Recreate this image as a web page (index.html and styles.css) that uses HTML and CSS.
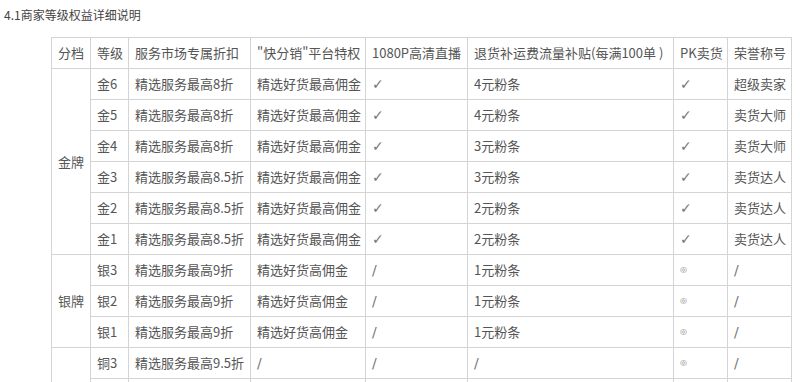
FILE: index.html
```html
<!DOCTYPE html>
<html lang="zh">
<head>
<meta charset="utf-8">
<title>商家等级权益详细说明</title>
<link rel="stylesheet" href="styles.css">
</head>
<body>
<div class="page">
  <h4 class="title">4.1商家等级权益详细说明</h4>
  <div class="table-wrap">
    <table class="grade">
      <colgroup>
        <col class="c-tier"><col class="c-level"><col class="c-disc"><col class="c-fx"><col class="c-live"><col class="c-sub"><col class="c-pk"><col class="c-hon">
      </colgroup>
      <thead>
        <tr><th>分档</th><th>等级</th><th>服务市场专属折扣</th><th>"快分销"平台特权</th><th>1080P高清直播</th><th>退货补运费流量补贴(每满100单 )</th><th>PK卖货</th><th>荣誉称号</th></tr>
      </thead>
      <tbody>
        <tr><td rowspan="6">金牌</td><td>金6</td><td>精选服务最高8折</td><td>精选好货最高佣金</td><td class="mk">✓</td><td>4元粉条</td><td class="mk">✓</td><td>超级卖家</td></tr>
        <tr><td>金5</td><td>精选服务最高8折</td><td>精选好货最高佣金</td><td class="mk">✓</td><td>4元粉条</td><td class="mk">✓</td><td>卖货大师</td></tr>
        <tr><td>金4</td><td>精选服务最高8折</td><td>精选好货最高佣金</td><td class="mk">✓</td><td>3元粉条</td><td class="mk">✓</td><td>卖货大师</td></tr>
        <tr><td>金3</td><td>精选服务最高8.5折</td><td>精选好货最高佣金</td><td class="mk">✓</td><td>3元粉条</td><td class="mk">✓</td><td>卖货达人</td></tr>
        <tr><td>金2</td><td>精选服务最高8.5折</td><td>精选好货最高佣金</td><td class="mk">✓</td><td>2元粉条</td><td class="mk">✓</td><td>卖货达人</td></tr>
        <tr><td>金1</td><td>精选服务最高8.5折</td><td>精选好货最高佣金</td><td class="mk">✓</td><td>2元粉条</td><td class="mk">✓</td><td>卖货达人</td></tr>
        <tr><td rowspan="3">银牌</td><td>银3</td><td>精选服务最高9折</td><td>精选好货高佣金</td><td class="mk">/</td><td>1元粉条</td><td class="dot">◎</td><td class="mk">/</td></tr>
        <tr><td>银2</td><td>精选服务最高9折</td><td>精选好货高佣金</td><td class="mk">/</td><td>1元粉条</td><td class="dot">◎</td><td class="mk">/</td></tr>
        <tr><td>银1</td><td>精选服务最高9折</td><td>精选好货高佣金</td><td class="mk">/</td><td>1元粉条</td><td class="dot">◎</td><td class="mk">/</td></tr>
        <tr><td rowspan="3">铜牌</td><td>铜3</td><td>精选服务最高9.5折</td><td class="mk">/</td><td class="mk">/</td><td class="mk">/</td><td class="dot">◎</td><td class="mk">/</td></tr>
        <tr><td>铜2</td><td>精选服务最高9.5折</td><td class="mk">/</td><td class="mk">/</td><td class="mk">/</td><td class="dot">◎</td><td class="mk">/</td></tr>
        <tr><td>铜1</td><td>精选服务最高9.5折</td><td class="mk">/</td><td class="mk">/</td><td class="mk">/</td><td class="dot">◎</td><td class="mk">/</td></tr>
      </tbody>
    </table>
  </div>
</div>
</body>
</html>
```

FILE: styles.css
```css
html, body {
  margin: 0;
  padding: 0;
  background: #fff;
}
body {
  font-family: "Noto Sans CJK SC", "Liberation Sans", sans-serif;
  color: #444;
}
.page {
  padding: 0 0 0 4px;
}
.title {
  margin: 0;
  padding-top: 6px;
  height: 37px;
  box-sizing: border-box;
  font-size: 12px;
  line-height: 17px;
  font-weight: normal;
  color: #444;
}
.table-wrap {
  padding-left: 47px;
}
.grade {
  border-collapse: collapse;
  table-layout: fixed;
  width: 741px;
  font-size: 13px;
  color: #555;
}
.grade th, .grade td {
  border: 1px solid #d4d4d4;
  height: 31px;
  padding: 0 6px;
  box-sizing: border-box;
  text-align: left;
  font-weight: normal;
  white-space: nowrap;
  line-height: 16px;
  vertical-align: middle;
  overflow: hidden;
}
.c-tier { width: 39px; }
.c-level { width: 38px; }
.c-disc { width: 122px; }
.c-fx { width: 115px; }
.c-live { width: 102px; }
.c-sub { width: 206px; }
.c-pk { width: 54px; }
.c-hon { width: 64px; }
.mk {
  color: #777;
  font-family: "DejaVu Sans", sans-serif;
  font-size: 14px;
  font-weight: 300;
}
.dot {
  color: #888;
  font-size: 8px;
  font-family: "DejaVu Sans", sans-serif;
}
```
